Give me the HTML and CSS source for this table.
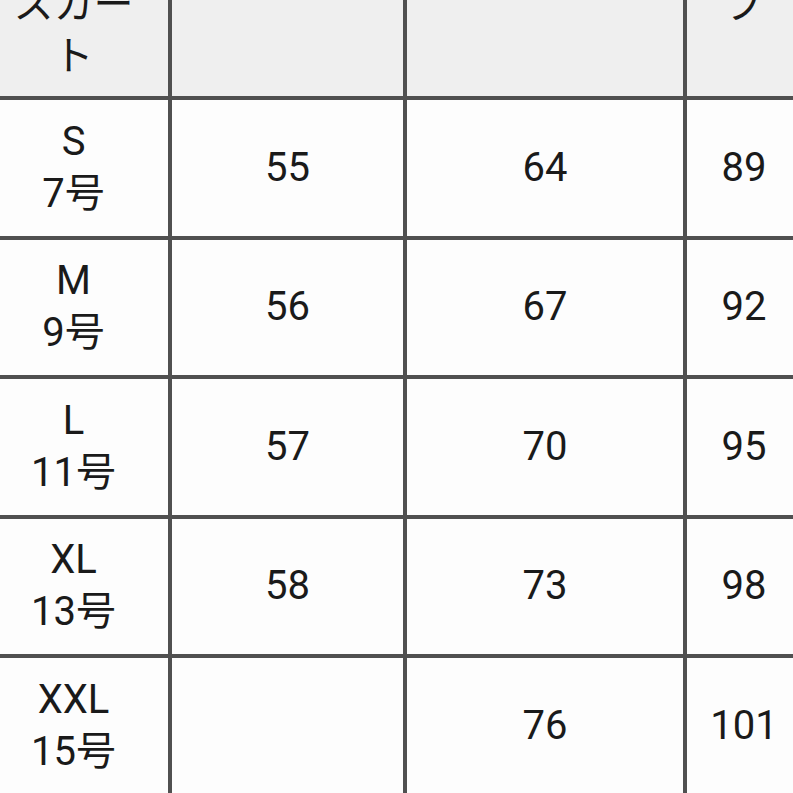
FILE: index.html
```html
<!DOCTYPE html>
<html lang="ja">
<head>
<meta charset="utf-8">
<title>サイズ表</title>
<link rel="stylesheet" href="styles.css">
</head>
<body>
<div class="sheet">
  <div class="cell head"><span>レディ</span><span>ース</span><span>スカー</span><span>ト</span></div>
  <div class="cell head"></div>
  <div class="cell head"></div>
  <div class="cell head"><span>ヒッ</span><span>プ</span></div>

  <div class="cell size"><span>S</span><span>7号</span></div>
  <div class="cell">55</div>
  <div class="cell">64</div>
  <div class="cell">89</div>

  <div class="cell size"><span>M</span><span>9号</span></div>
  <div class="cell">56</div>
  <div class="cell">67</div>
  <div class="cell">92</div>

  <div class="cell size"><span>L</span><span>11号</span></div>
  <div class="cell">57</div>
  <div class="cell">70</div>
  <div class="cell">95</div>

  <div class="cell size"><span>XL</span><span>13号</span></div>
  <div class="cell">58</div>
  <div class="cell">73</div>
  <div class="cell">98</div>

  <div class="cell size"><span>XXL</span><span>15号</span></div>
  <div class="cell"></div>
  <div class="cell">76</div>
  <div class="cell">101</div>
</div>
</body>
</html>
```

FILE: styles.css
```css
html, body {
  margin: 0;
  padding: 0;
  width: 793px;
  height: 793px;
  overflow: hidden;
  background: #ffffff;
}

.sheet {
  display: grid;
  grid-template-columns: 189px 231px 276px 114px;
  grid-template-rows: 235px repeat(5, 135.5px);
  gap: 4px;
  background: #505050;
  margin-top: -139px;
  margin-left: -21px;
  width: max-content;
  font-family: Roboto, "Noto Sans CJK JP", sans-serif;
  font-size: 40px;
  line-height: 52px;
  color: #1a1a1a;
}

.cell {
  background: #fdfdfd;
  display: flex;
  flex-direction: column;
  align-items: center;
  justify-content: center;
  text-align: center;
  white-space: nowrap;
}

.head {
  background: #efefef;
}

.cell span {
  display: block;
}
```
